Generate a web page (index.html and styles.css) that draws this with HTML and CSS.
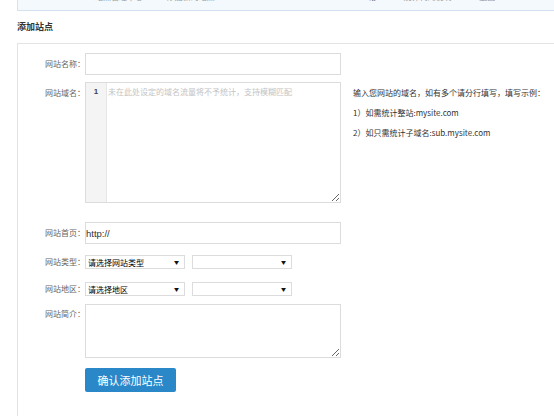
FILE: index.html
```html
<!DOCTYPE html>
<html lang="zh-CN">
<head>
    <meta charset="UTF-8">
    <title>添加站点</title>
    <link rel="stylesheet" href="styles.css">
</head>
<body>

<div class="topbar">
    <div class="topbar-line">
        <span class="tb1">站点管理中心</span>
        <span class="tb2">添加新的站点</span>
        <span class="tb3">帮</span>
        <span class="tb4">统计代码说明</span>
        <span class="tb5">返回</span>
    </div>
</div>

<h3 class="title">添加站点</h3>

<div class="panel">
    <div class="row row-name">
        <label class="lbl">网站名称：</label>
        <input type="text" class="text">
    </div>

    <div class="row row-domain">
        <label class="lbl lbl-top">网站域名：</label>
        <div class="editor">
            <div class="gutter">1</div>
            <textarea class="code" placeholder="未在此处设定的域名流量将不予统计，支持模糊匹配"></textarea>
        </div>
        <div class="help">
            <p>输入您网站的域名，如有多个请分行填写，填写示例：</p>
            <p>1）如需统计整站:mysite.com</p>
            <p>2）如只需统计子域名:sub.mysite.com</p>
        </div>
    </div>

    <div class="row row-home">
        <label class="lbl">网站首页：</label>
        <input type="text" class="text url" value="http://">
    </div>

    <div class="row row-type">
        <label class="lbl">网站类型：</label>
        <span class="sel"><select><option>请选择网站类型</option></select></span>
        <span class="sel"><select><option></option></select></span>
    </div>

    <div class="row row-area">
        <label class="lbl">网站地区：</label>
        <span class="sel"><select><option>请选择地区</option></select></span>
        <span class="sel"><select><option></option></select></span>
    </div>

    <div class="row row-intro">
        <label class="lbl lbl-top">网站简介：</label>
        <textarea class="intro"></textarea>
    </div>

    <div class="row row-btn">
        <span class="lbl"></span>
        <button class="btn">确认添加站点</button>
    </div>
</div>

</body>
</html>
```

FILE: styles.css
```css
html, body { margin: 0; padding: 0; background: #fff; overflow: hidden; }
body { font-family: "Noto Sans CJK SC", "Noto Sans", sans-serif; font-size: 8px; color: #333; }

.topbar { margin-left: 17px; height: 10px; background: #f4f9fe; border-left: 1px solid #d6e4ef; border-bottom: 1px solid #d3e2ee; overflow: hidden; }
.topbar-line { margin-top: -9px; height: 12px; line-height: 12px; color: #999; white-space: nowrap; }
.topbar-line span { display: inline-block; }
.tb1 { margin-left: 77px; }
.tb2 { margin-left: 22px; }
.tb3 { margin-left: 152px; color: #333; }
.tb4 { margin-left: 25px; }
.tb5 { margin-left: 26px; }

.title { margin: 0 0 9px 17px; padding-top: 9px; font-size: 9px; line-height: 14px; font-weight: bold; color: #333; }

.panel { margin-left: 17px; border-left: 1px solid #e3e3e3; border-top: 1px solid #e3e3e3; padding-top: 9px; height: 363px; }

.row { display: flex; align-items: center; }
.lbl { width: 67px; flex: none; text-align: right; color: #666; line-height: 14px; }
.lbl-top { align-self: flex-start; }

.text { width: 256px; height: 22px; box-sizing: border-box; border: 1px solid #dcdcdc; padding: 0; margin: 0; font-size: 9.5px; font-family: "Liberation Sans", sans-serif; color: #333; outline: none; }

.row-name { margin-bottom: 7px; }

.row-domain { align-items: flex-start; margin-bottom: 19px; }
.row-domain .lbl { padding-top: 4px; }
.editor { display: flex; width: 256px; height: 121px; box-sizing: border-box; border: 1px solid #dcdcdc; flex: none; }
.gutter { width: 21px; background: #f4f4f4; border-right: 1px solid #e6e6e6; text-align: center; padding-top: 2px; line-height: 14px; font-family: "Liberation Sans", sans-serif; font-size: 8px; font-weight: bold; color: #444; box-sizing: border-box; }
.code { flex: 1; border: none; margin: 0; padding: 2px 1px; line-height: 14px; font-size: 8px; font-family: "Noto Sans CJK SC", sans-serif; outline: none; resize: both; }
.code::placeholder { color: #c4c4c4; }
.help { margin-left: 12px; padding-top: 1px; white-space: nowrap; color: #333; }
.help p { margin: 0; line-height: 20px; }

.row-home { margin-bottom: 11px; }

.row-type { margin-bottom: 13px; }
.row-area { margin-bottom: 8px; }
.sel { position: relative; display: inline-block; width: 100px; height: 14px; margin-right: 7px; }
.sel select { appearance: none; -webkit-appearance: none; width: 100%; height: 100%; box-sizing: border-box; border: 1px solid #dcdcdc; background: #fff; margin: 0; padding: 0 2px; font-size: 8px; font-family: "Noto Sans CJK SC", sans-serif; color: #000; border-radius: 0; outline: none; }
.sel::after { content: "▼"; position: absolute; right: 6px; top: 4px; font-size: 5px; line-height: 5px; color: #111; pointer-events: none; }

.row-intro { align-items: flex-start; margin-bottom: 10px; }
.row-intro .lbl { padding-top: 3px; }
.intro { width: 256px; height: 54px; box-sizing: border-box; border: 1px solid #dcdcdc; margin: 0; outline: none; }

.btn { width: 91px; height: 24px; border: none; border-radius: 2px; background: #2b88c8; color: #fff; font-size: 11px; font-family: "Noto Sans CJK SC", sans-serif; padding: 0; cursor: pointer; }
```
